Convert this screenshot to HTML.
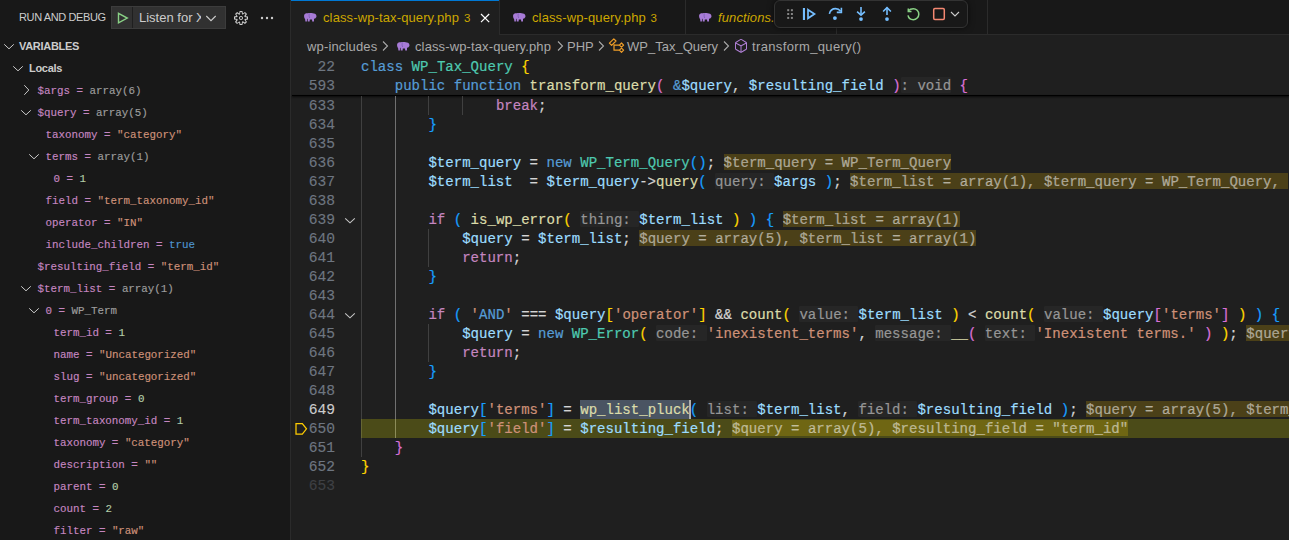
<!DOCTYPE html>
<html><head><meta charset="utf-8">
<style>
*{box-sizing:border-box}
html,body{margin:0;padding:0}
body{width:1289px;height:540px;overflow:hidden;background:#1f1f1f;position:relative;font-family:"Liberation Sans",sans-serif;color:#cccccc}
.abs{position:absolute}
#side{position:absolute;left:0;top:0;width:290px;height:540px;background:#181818}
#sideborder{position:absolute;left:290px;top:0;width:1px;height:540px;background:#2b2b2b}
.vr{position:absolute;height:22px;line-height:22px;padding-top:1px;-webkit-text-stroke:0.15px;font-family:"Liberation Mono",monospace;font-size:10.83px;white-space:pre}
.chev{position:absolute;width:16px;height:16px}
#tabs{position:absolute;left:291px;top:0;width:998px;height:35px;background:#181818}
#tabsborder{position:absolute;left:291px;top:34px;width:998px;height:1px;background:#2b2b2b}
.tab{position:absolute;top:0;height:35px;background:#181818}
.tabt{position:absolute;top:0;height:35px;line-height:35px;font-size:13px;color:#cca700;white-space:pre;letter-spacing:0.12px}
.ln{position:absolute;left:291px;width:44px;height:19px;line-height:19px;padding-top:1px;text-align:right;font-family:"Liberation Mono",monospace;font-size:14.6px;-webkit-text-stroke:0.15px;color:#6e7681}
.cl{position:absolute;left:361px;height:19px;line-height:19px;font-family:"Liberation Mono",monospace;font-size:14.05px;white-space:pre;color:#d4d4d4;padding-top:1px;-webkit-text-stroke:0.2px}
.ig{position:absolute;width:1px;height:19px}
.hint{color:#969696;position:relative;display:inline-block}
.hint::before{content:"";position:absolute;left:0;right:0;top:0px;height:16px;background:#262626;z-index:-1;border-radius:1px}
.iv{color:rgba(255,255,255,0.5);position:relative;display:inline-block;margin-left:8.5px}
.iv::before{content:"";position:absolute;left:0;right:0;top:0px;height:16px;background:rgba(255,200,0,0.2);z-index:-1}
.bc{position:absolute;top:36px;height:22px;line-height:22px;font-size:13px;color:#a9a9a9;white-space:pre}
</style></head><body>

<!-- SIDEBAR -->
<div id="side"></div>
<div id="sideborder"></div>
<div class="abs" style="left:19px;top:0;height:35px;line-height:35px;font-size:11px;letter-spacing:-0.38px;color:#cccccc;white-space:pre">RUN AND DEBUG</div>
<!-- launch button -->
<div class="abs" style="left:111px;top:6px;width:115px;height:23px;background:#313131;border:1px solid #3c3c3c;border-radius:0"></div>
<div class="abs" style="left:132px;top:7px;width:1px;height:21px;background:#1f1f1f"></div>
<svg class="abs" style="left:114px;top:9px" width="16" height="17" viewBox="0 0 16 17"><path d="M4.5 4.3 L13.3 9.1 L4.5 13.9 Z" fill="none" stroke="#89d185" stroke-width="1.4" stroke-linejoin="miter"/></svg>
<div class="abs" style="left:139px;top:6px;width:62px;height:23px;line-height:23px;font-size:13px;color:#cccccc;white-space:pre;overflow:hidden">Listen for Xdebug</div>
<svg class="abs" style="left:203px;top:10px" width="16" height="16" viewBox="0 0 16 16"><path d="M3.3 6 L8 10.7 L12.7 6" fill="none" stroke="#cccccc" stroke-width="1.1"/></svg>
<!-- gear -->
<svg class="abs" style="left:233px;top:10px" width="16" height="16" viewBox="0 0 16 16">
<path fill="#cccccc" fill-rule="evenodd" d="M9.1 4.4L8.6 2H7.4l-.5 2.4-.7.3-2-1.3-.9.8 1.3 2-.2.7-2.4.5v1.2l2.4.5.3.8-1.3 2 .8.8 2-1.3.8.3.4 2.3h1.2l.5-2.4.8-.3 2 1.3.8-.8-1.3-2 .3-.8 2.3-.4V7.4l-2.4-.5-.3-.8 1.3-2-.8-.8-2 1.3-.7-.2zM9.4 1l.5 2.4L12 2.1l2 2-1.4 2.1 2.4.4v2.8l-2.4.5L14 12l-2 2-2.1-1.4-.5 2.4H6.6l-.5-2.4L4 13.9l-2-2 1.4-2.1L1 9.4V6.6l2.4-.5L2.1 4l2-2 2.1 1.4.4-2.4h2.8zm.6 7c0 1.1-.9 2-2 2s-2-.9-2-2 .9-2 2-2 2 .9 2 2zM8 9c.6 0 1-.4 1-1s-.4-1-1-1-1 .4-1 1 .4 1 1 1z"/></svg>
<!-- ellipsis -->
<svg class="abs" style="left:259px;top:10px" width="16" height="16" viewBox="0 0 16 16"><circle cx="3" cy="8" r="1.2" fill="#cccccc"/><circle cx="8" cy="8" r="1.2" fill="#cccccc"/><circle cx="13" cy="8" r="1.2" fill="#cccccc"/></svg>

<!-- variables header -->
<svg class="abs" style="left:1px;top:38px" width="16" height="16" viewBox="0 0 16 16"><path d="M3.2 6.3 L8 10.8 L12.8 6.3" fill="none" stroke="#c8c8c8" stroke-width="1"/></svg>
<div class="abs" style="left:19px;top:35px;height:22px;line-height:22px;font-size:11px;font-weight:bold;letter-spacing:-0.3px;color:#cccccc">VARIABLES</div>
<svg class="abs" style="left:10px;top:60px" width="16" height="16" viewBox="0 0 16 16"><path d="M3.2 6.3 L8 10.8 L12.8 6.3" fill="none" stroke="#c8c8c8" stroke-width="1"/></svg>
<div class="abs" style="left:29px;top:57px;height:22px;line-height:22px;font-size:11px;font-weight:bold;letter-spacing:-0.3px;color:#cccccc">Locals</div>
<div class="chev" style="left:17.9px;top:82px"><svg width="16" height="16" viewBox="0 0 16 16"><path d="M6.3 3.2 L10.8 8 L6.3 12.8" fill="none" stroke="#c8c8c8" stroke-width="1"/></svg></div>
<div class="vr" style="left:37.4px;top:79px"><span style="color:#c586c0">$args =</span> <span style="color:#9d9d9d">array(6)</span></div>
<div class="chev" style="left:17.9px;top:104px"><svg width="16" height="16" viewBox="0 0 16 16"><path d="M3.2 6.3 L8 10.8 L12.8 6.3" fill="none" stroke="#c8c8c8" stroke-width="1"/></svg></div>
<div class="vr" style="left:37.4px;top:101px"><span style="color:#c586c0">$query =</span> <span style="color:#9d9d9d">array(5)</span></div>
<div class="vr" style="left:45.6px;top:123px"><span style="color:#c586c0">taxonomy =</span> <span style="color:#ce9178">"category"</span></div>
<div class="chev" style="left:26.1px;top:148px"><svg width="16" height="16" viewBox="0 0 16 16"><path d="M3.2 6.3 L8 10.8 L12.8 6.3" fill="none" stroke="#c8c8c8" stroke-width="1"/></svg></div>
<div class="vr" style="left:45.6px;top:145px"><span style="color:#c586c0">terms =</span> <span style="color:#9d9d9d">array(1)</span></div>
<div class="vr" style="left:53.4px;top:167px"><span style="color:#c586c0">0 =</span> <span style="color:#b5cea8">1</span></div>
<div class="vr" style="left:45.6px;top:189px"><span style="color:#c586c0">field =</span> <span style="color:#ce9178">"term_taxonomy_id"</span></div>
<div class="vr" style="left:45.6px;top:211px"><span style="color:#c586c0">operator =</span> <span style="color:#ce9178">"IN"</span></div>
<div class="vr" style="left:45.6px;top:233px"><span style="color:#c586c0">include_children =</span> <span style="color:#4e94ce">true</span></div>
<div class="vr" style="left:37.4px;top:255px"><span style="color:#c586c0">$resulting_field =</span> <span style="color:#ce9178">"term_id"</span></div>
<div class="chev" style="left:17.9px;top:280px"><svg width="16" height="16" viewBox="0 0 16 16"><path d="M3.2 6.3 L8 10.8 L12.8 6.3" fill="none" stroke="#c8c8c8" stroke-width="1"/></svg></div>
<div class="vr" style="left:37.4px;top:277px"><span style="color:#c586c0">$term_list =</span> <span style="color:#9d9d9d">array(1)</span></div>
<div class="chev" style="left:26.1px;top:302px"><svg width="16" height="16" viewBox="0 0 16 16"><path d="M3.2 6.3 L8 10.8 L12.8 6.3" fill="none" stroke="#c8c8c8" stroke-width="1"/></svg></div>
<div class="vr" style="left:45.6px;top:299px"><span style="color:#c586c0">0 =</span> <span style="color:#9d9d9d">WP_Term</span></div>
<div class="vr" style="left:53.4px;top:321px"><span style="color:#c586c0">term_id =</span> <span style="color:#b5cea8">1</span></div>
<div class="vr" style="left:53.4px;top:343px"><span style="color:#c586c0">name =</span> <span style="color:#ce9178">"Uncategorized"</span></div>
<div class="vr" style="left:53.4px;top:365px"><span style="color:#c586c0">slug =</span> <span style="color:#ce9178">"uncategorized"</span></div>
<div class="vr" style="left:53.4px;top:387px"><span style="color:#c586c0">term_group =</span> <span style="color:#b5cea8">0</span></div>
<div class="vr" style="left:53.4px;top:409px"><span style="color:#c586c0">term_taxonomy_id =</span> <span style="color:#b5cea8">1</span></div>
<div class="vr" style="left:53.4px;top:431px"><span style="color:#c586c0">taxonomy =</span> <span style="color:#ce9178">"category"</span></div>
<div class="vr" style="left:53.4px;top:453px"><span style="color:#c586c0">description =</span> <span style="color:#ce9178">""</span></div>
<div class="vr" style="left:53.4px;top:475px"><span style="color:#c586c0">parent =</span> <span style="color:#b5cea8">0</span></div>
<div class="vr" style="left:53.4px;top:497px"><span style="color:#c586c0">count =</span> <span style="color:#b5cea8">2</span></div>
<div class="vr" style="left:53.4px;top:519px"><span style="color:#c586c0">filter =</span> <span style="color:#ce9178">"raw"</span></div>

<!-- TABS -->
<div id="tabs"></div>
<div id="tabsborder"></div>
<div class="tab" style="left:291px;width:208px;height:35px;background:#1f1f1f;border-top:1px solid #0078d4"></div>
<div class="abs" style="left:499px;top:0;width:1px;height:35px;background:#2b2b2b"></div>
<div class="abs" style="left:685px;top:0;width:1px;height:35px;background:#2b2b2b"></div>
<div class="abs" style="left:836px;top:0;width:1px;height:35px;background:#2b2b2b"></div>
<div class="abs" style="left:987px;top:0;width:1px;height:35px;background:#2b2b2b"></div>
<svg class="abs" style="left:303px;top:13px" width="14" height="10" viewBox="0 0 14 10"><path fill="#a77bd6" d="M1.2 2 C1.6 0.6 3.2 0 4.8 0.3 C6.5 -0.1 10 0 12 0.8 C13.2 1.4 13.6 2.8 13.4 4 L12.2 5.6 L11 5.8 L11 8.4 L9.2 8.4 L9 6.4 L6.8 6.4 L6.6 8.4 L4.8 8.4 L4.6 6.2 L4 5.4 L3.9 8.4 L2.4 8.4 L2.2 6.4 C1.2 5.4 0.9 3.4 1.2 2 Z"/><path d="M6.4 0.5 C5.9 2 6 3.6 6.7 5" fill="none" stroke="#7a5cb4" stroke-width="0.8"/></svg>
<svg class="abs" style="left:512px;top:13px" width="14" height="10" viewBox="0 0 14 10"><path fill="#a77bd6" d="M1.2 2 C1.6 0.6 3.2 0 4.8 0.3 C6.5 -0.1 10 0 12 0.8 C13.2 1.4 13.6 2.8 13.4 4 L12.2 5.6 L11 5.8 L11 8.4 L9.2 8.4 L9 6.4 L6.8 6.4 L6.6 8.4 L4.8 8.4 L4.6 6.2 L4 5.4 L3.9 8.4 L2.4 8.4 L2.2 6.4 C1.2 5.4 0.9 3.4 1.2 2 Z"/><path d="M6.4 0.5 C5.9 2 6 3.6 6.7 5" fill="none" stroke="#7a5cb4" stroke-width="0.8"/></svg>
<svg class="abs" style="left:698px;top:13px" width="14" height="10" viewBox="0 0 14 10"><path fill="#a77bd6" d="M1.2 2 C1.6 0.6 3.2 0 4.8 0.3 C6.5 -0.1 10 0 12 0.8 C13.2 1.4 13.6 2.8 13.4 4 L12.2 5.6 L11 5.8 L11 8.4 L9.2 8.4 L9 6.4 L6.8 6.4 L6.6 8.4 L4.8 8.4 L4.6 6.2 L4 5.4 L3.9 8.4 L2.4 8.4 L2.2 6.4 C1.2 5.4 0.9 3.4 1.2 2 Z"/><path d="M6.4 0.5 C5.9 2 6 3.6 6.7 5" fill="none" stroke="#7a5cb4" stroke-width="0.8"/></svg>
<div class="tabt" style="left:323px">class-wp-tax-query.php</div>
<div class="tabt" style="left:464px;top:1px;font-size:11.5px">3</div>
<svg class="abs" style="left:477px;top:10px" width="16" height="16" viewBox="0 0 16 16"><path d="M4 4 L12.2 12.2 M12.2 4 L4 12.2" stroke="#ffffff" stroke-width="1.2"/></svg>
<div class="tabt" style="left:532px">class-wp-query.php</div>
<div class="tabt" style="left:650.5px;top:1px;font-size:11.5px">3</div>
<div class="tabt" style="left:718px;font-style:italic">functions.</div>

<!-- debug toolbar -->
<div class="abs" style="left:774px;top:0px;width:194px;height:28px;background:#181818;border:1px solid #333333;border-radius:6px;box-shadow:0 0 6px rgba(0,0,0,0.6)"></div>

<svg class="abs" style="left:786px;top:8px" width="8" height="12" viewBox="0 0 8 12"><g fill="#858585"><rect x="1.2" y="1.2" width="2" height="2"/><rect x="4.9" y="1.2" width="2" height="2"/><rect x="1.2" y="5" width="2" height="2"/><rect x="4.9" y="5" width="2" height="2"/><rect x="1.2" y="8.9" width="2" height="2"/><rect x="4.9" y="8.9" width="2" height="2"/></g></svg>
<svg class="abs" style="left:801px;top:6px" width="16" height="16" viewBox="0 0 16 16"><rect x="1.9" y="2" width="2.1" height="12" fill="#75beff"/><path d="M7 3.7 L13.5 8 L7 12.3 Z" fill="none" stroke="#75beff" stroke-width="1.7" stroke-linejoin="miter"/></svg>
<svg class="abs" style="left:827px;top:6px" width="16" height="16" viewBox="0 0 16 16"><path d="M2.4 7.8 C3.2 4.2 6 2.6 8.6 2.6 C10.8 2.6 12.4 3.6 13.6 5.2" fill="none" stroke="#75beff" stroke-width="1.6"/><path d="M14.4 1.8 L14.4 6.4 L9.8 6.4" fill="none" stroke="#75beff" stroke-width="1.6"/><circle cx="7.9" cy="12.1" r="1.9" fill="#75beff"/></svg>
<svg class="abs" style="left:853px;top:6px" width="16" height="16" viewBox="0 0 16 16"><path d="M8 1 L8 9" stroke="#75beff" stroke-width="1.6"/><path d="M4.1 5.6 L8 9.1 L11.9 5.6" fill="none" stroke="#75beff" stroke-width="1.6"/><circle cx="8" cy="13.1" r="1.9" fill="#75beff"/></svg>
<svg class="abs" style="left:879px;top:6px" width="16" height="16" viewBox="0 0 16 16"><path d="M8 9 L8 1.6" stroke="#75beff" stroke-width="1.6"/><path d="M4.1 5.5 L8 1.6 L11.9 5.5" fill="none" stroke="#75beff" stroke-width="1.6"/><circle cx="8" cy="13.1" r="1.9" fill="#75beff"/></svg>
<svg class="abs" style="left:905px;top:6px" width="16" height="16" viewBox="0 0 16 16"><path d="M3.6 4.6 C4.6 3.3 6.3 2.7 8.3 2.7 C11.3 2.7 13.8 5.2 13.8 8.2 C13.8 11.2 11.3 13.7 8.3 13.7 C5.7 13.7 3.5 11.9 3 9.4" fill="none" stroke="#89d185" stroke-width="1.5"/><path d="M3.3 2.4 L3.3 5.6 L6.5 5.6" fill="none" stroke="#89d185" stroke-width="1.5"/></svg>
<svg class="abs" style="left:931px;top:6px" width="16" height="16" viewBox="0 0 16 16"><rect x="2.7" y="2.6" width="10.6" height="10.8" rx="1.2" fill="none" stroke="#f48771" stroke-width="1.5"/></svg>
<svg class="abs" style="left:947px;top:6px" width="16" height="16" viewBox="0 0 16 16"><path d="M4 6 L8 10 L12 6" fill="none" stroke="#cccccc" stroke-width="1.1"/></svg>

<!-- BREADCRUMBS -->
<svg class="abs" style="left:381px;top:40px" width="8" height="12" viewBox="0 0 8 12"><path d="M2 1.5 L6.5 6 L2 10.5" fill="none" stroke="#a9a9a9" stroke-width="1.1"/></svg>
<svg class="abs" style="left:556px;top:40px" width="8" height="12" viewBox="0 0 8 12"><path d="M2 1.5 L6.5 6 L2 10.5" fill="none" stroke="#a9a9a9" stroke-width="1.1"/></svg>
<svg class="abs" style="left:597px;top:40px" width="8" height="12" viewBox="0 0 8 12"><path d="M2 1.5 L6.5 6 L2 10.5" fill="none" stroke="#a9a9a9" stroke-width="1.1"/></svg>
<svg class="abs" style="left:722px;top:40px" width="8" height="12" viewBox="0 0 8 12"><path d="M2 1.5 L6.5 6 L2 10.5" fill="none" stroke="#a9a9a9" stroke-width="1.1"/></svg>
<svg class="abs" style="left:396px;top:42px" width="14" height="10" viewBox="0 0 14 10"><path fill="#a77bd6" d="M1.2 2 C1.6 0.6 3.2 0 4.8 0.3 C6.5 -0.1 10 0 12 0.8 C13.2 1.4 13.6 2.8 13.4 4 L12.2 5.6 L11 5.8 L11 8.4 L9.2 8.4 L9 6.4 L6.8 6.4 L6.6 8.4 L4.8 8.4 L4.6 6.2 L4 5.4 L3.9 8.4 L2.4 8.4 L2.2 6.4 C1.2 5.4 0.9 3.4 1.2 2 Z"/><path d="M6.4 0.5 C5.9 2 6 3.6 6.7 5" fill="none" stroke="#7a5cb4" stroke-width="0.8"/></svg>
<svg class="abs" style="left:606px;top:36px" width="20" height="20" viewBox="0 0 20 20"><g fill="none" stroke="#ee9d28" stroke-width="1.2" stroke-linejoin="round"><path d="M3.4 7.2 L7.8 2.8 L10 5 L5.6 9.4 Z"/><path d="M8 8.2 L8 14.2 L13.3 14.2 M8 9.1 L13.3 9.1"/><path d="M13.4 9.1 L15.5 7 L17.6 9.1 L15.5 11.2 Z"/><path d="M13.4 14.2 L15.5 12.1 L17.6 14.2 L15.5 16.3 Z"/></g></svg>
<svg class="abs" style="left:733px;top:38px" width="16" height="16" viewBox="0 0 16 16"><path fill="#b180d7" d="M13.51 4l-5-3h-1l-5 3-.49.86v6l.49.85 5 3h1l5-3 .49-.85v-6L13.51 4zm-6 9.56l-4.5-2.7V5.7l4.5 2.45v5.41zM3.27 4.7l4.74-2.84 4.74 2.84-4.74 2.59L3.27 4.7zm9.74 6.16l-4.5 2.7V8.15l4.5-2.45v5.16z"/></svg>
<div class="bc" style="left:307px;letter-spacing:0.15px">wp-includes</div>
<div class="bc" style="left:567px">PHP</div>
<div class="bc" style="left:415px;letter-spacing:0.12px">class-wp-tax-query.php</div>
<div class="bc" style="left:627px">WP_Tax_Query</div>
<div class="bc" style="left:752px;letter-spacing:0.36px">transform_query()</div>

<!-- STICKY -->
<div class="ln" style="top:57px">22</div>
<div class="cl" style="top:57px"><span style="color:#569cd6">class</span> <span style="color:#4ec9b0">WP_Tax_Query</span> <span style="color:#ffd700">{</span></div>
<div class="ln" style="top:76px">593</div>
<div class="cl" style="top:76px">    <span style="color:#569cd6">public</span> <span style="color:#569cd6">function</span> <span style="color:#dcdcaa">transform_query</span><span style="color:#da70d6">(</span> <span style="color:#569cd6">&amp;</span><span style="color:#9cdcfe">$query</span><span style="color:#d4d4d4">, </span><span style="color:#9cdcfe">$resulting_field</span> <span style="color:#da70d6">)</span><span class="hint">: void</span> <span style="color:#da70d6">{</span></div>
<div class="abs" style="left:292px;top:95px;width:997px;height:1px;background:#000;box-shadow:0 1px 2px #000"></div>

<!-- CODE -->
<svg class="abs" style="left:294px;top:421px" width="15" height="15" viewBox="0 0 15 15"><path d="M2 2.5 L8.3 2.5 L12.5 7.8 L8.3 13.1 L2 13.1 Z" fill="none" stroke="#ffcc00" stroke-width="1.25" stroke-linejoin="miter"/></svg>
<svg class="abs" style="left:342px;top:212px" width="16" height="16" viewBox="0 0 16 16"><path d="M3.2 6.3 L8 10.8 L12.8 6.3" fill="none" stroke="#c5c5c5" stroke-width="1.1"/></svg>
<svg class="abs" style="left:342px;top:307px" width="16" height="16" viewBox="0 0 16 16"><path d="M3.2 6.3 L8 10.8 L12.8 6.3" fill="none" stroke="#c5c5c5" stroke-width="1.1"/></svg>

<div class="ln" style="top:96px;color:#6e7681">633</div>
<div class="ig" style="left:361.00px;top:96px;background:#404040"></div>
<div class="ig" style="left:394.72px;top:96px;background:#707070"></div>
<div class="ig" style="left:428.44px;top:96px;background:#404040"></div>
<div class="ig" style="left:462.16px;top:96px;background:#404040"></div>
<div class="ln" style="top:115px;color:#6e7681">634</div>
<div class="ig" style="left:361.00px;top:115px;background:#404040"></div>
<div class="ig" style="left:394.72px;top:115px;background:#707070"></div>
<div class="ln" style="top:134px;color:#6e7681">635</div>
<div class="ig" style="left:361.00px;top:134px;background:#404040"></div>
<div class="ig" style="left:394.72px;top:134px;background:#707070"></div>
<div class="ln" style="top:153px;color:#6e7681">636</div>
<div class="ig" style="left:361.00px;top:153px;background:#404040"></div>
<div class="ig" style="left:394.72px;top:153px;background:#707070"></div>
<div class="ln" style="top:172px;color:#6e7681">637</div>
<div class="ig" style="left:361.00px;top:172px;background:#404040"></div>
<div class="ig" style="left:394.72px;top:172px;background:#707070"></div>
<div class="ln" style="top:191px;color:#6e7681">638</div>
<div class="ig" style="left:361.00px;top:191px;background:#404040"></div>
<div class="ig" style="left:394.72px;top:191px;background:#707070"></div>
<div class="ln" style="top:210px;color:#6e7681">639</div>
<div class="ig" style="left:361.00px;top:210px;background:#404040"></div>
<div class="ig" style="left:394.72px;top:210px;background:#707070"></div>
<div class="ln" style="top:229px;color:#6e7681">640</div>
<div class="ig" style="left:361.00px;top:229px;background:#404040"></div>
<div class="ig" style="left:394.72px;top:229px;background:#707070"></div>
<div class="ig" style="left:428.44px;top:229px;background:#404040"></div>
<div class="ln" style="top:248px;color:#6e7681">641</div>
<div class="ig" style="left:361.00px;top:248px;background:#404040"></div>
<div class="ig" style="left:394.72px;top:248px;background:#707070"></div>
<div class="ig" style="left:428.44px;top:248px;background:#404040"></div>
<div class="ln" style="top:267px;color:#6e7681">642</div>
<div class="ig" style="left:361.00px;top:267px;background:#404040"></div>
<div class="ig" style="left:394.72px;top:267px;background:#707070"></div>
<div class="ln" style="top:286px;color:#6e7681">643</div>
<div class="ig" style="left:361.00px;top:286px;background:#404040"></div>
<div class="ig" style="left:394.72px;top:286px;background:#707070"></div>
<div class="ln" style="top:305px;color:#6e7681">644</div>
<div class="ig" style="left:361.00px;top:305px;background:#404040"></div>
<div class="ig" style="left:394.72px;top:305px;background:#707070"></div>
<div class="ln" style="top:324px;color:#6e7681">645</div>
<div class="ig" style="left:361.00px;top:324px;background:#404040"></div>
<div class="ig" style="left:394.72px;top:324px;background:#707070"></div>
<div class="ig" style="left:428.44px;top:324px;background:#404040"></div>
<div class="ln" style="top:343px;color:#6e7681">646</div>
<div class="ig" style="left:361.00px;top:343px;background:#404040"></div>
<div class="ig" style="left:394.72px;top:343px;background:#707070"></div>
<div class="ig" style="left:428.44px;top:343px;background:#404040"></div>
<div class="ln" style="top:362px;color:#6e7681">647</div>
<div class="ig" style="left:361.00px;top:362px;background:#404040"></div>
<div class="ig" style="left:394.72px;top:362px;background:#707070"></div>
<div class="ln" style="top:381px;color:#6e7681">648</div>
<div class="ig" style="left:361.00px;top:381px;background:#404040"></div>
<div class="ig" style="left:394.72px;top:381px;background:#707070"></div>
<div class="ln" style="top:400px;color:#cccccc">649</div>
<div class="ig" style="left:361.00px;top:400px;background:#404040"></div>
<div class="ig" style="left:394.72px;top:400px;background:#707070"></div>
<div class="ln" style="top:419px;color:#6e7681">650</div>
<div class="ig" style="left:361.00px;top:419px;background:#404040"></div>
<div class="ig" style="left:394.72px;top:419px;background:#707070"></div>
<div class="ln" style="top:438px;color:#6e7681">651</div>
<div class="ig" style="left:361.00px;top:438px;background:#404040"></div>
<div class="ln" style="top:457px;color:#6e7681">652</div>
<div class="ln" style="top:476px;color:#3e4044">653</div>
<div class="abs" style="left:361px;top:419px;width:928px;height:19px;background:rgba(255,255,0,0.2)"></div>
<div class="abs" style="left:580px;top:400px;width:110px;height:19px;background:#4a5462"></div>
<div class="cl" style="top:96px">                <span style="color:#c586c0">break</span><span style="color:#d4d4d4">;</span></div>
<div class="cl" style="top:115px">        <span style="color:#179fff">}</span></div>
<div class="cl" style="top:134px"></div>
<div class="cl" style="top:153px">        <span style="color:#9cdcfe">$term_query</span><span style="color:#d4d4d4"> = </span><span style="color:#569cd6">new</span> <span style="color:#4ec9b0">WP_Term_Query</span><span style="color:#179fff">()</span><span style="color:#d4d4d4">;</span><span class="iv">$term_query = WP_Term_Query</span></div>
<div class="cl" style="top:172px">        <span style="color:#9cdcfe">$term_list</span><span style="color:#d4d4d4">  = </span><span style="color:#9cdcfe">$term_query</span><span style="color:#d4d4d4">-&gt;</span><span style="color:#dcdcaa">query</span><span style="color:#179fff">(</span> <span class="hint">query: </span><span style="color:#9cdcfe">$args</span> <span style="color:#179fff">)</span><span style="color:#d4d4d4">;</span><span class="iv">$term_list = array(1), $term_query = WP_Term_Query, </span></div>
<div class="cl" style="top:191px"></div>
<div class="cl" style="top:210px">        <span style="color:#c586c0">if</span> <span style="color:#179fff">(</span> <span style="color:#dcdcaa">is_wp_error</span><span style="color:#ffd700">(</span> <span class="hint">thing: </span><span style="color:#9cdcfe">$term_list</span> <span style="color:#ffd700">)</span> <span style="color:#179fff">)</span> <span style="color:#179fff">{</span><span class="iv">$term_list = array(1)</span></div>
<div class="cl" style="top:229px">            <span style="color:#9cdcfe">$query</span><span style="color:#d4d4d4"> = </span><span style="color:#9cdcfe">$term_list</span><span style="color:#d4d4d4">;</span><span class="iv">$query = array(5), $term_list = array(1)</span></div>
<div class="cl" style="top:248px">            <span style="color:#c586c0">return</span><span style="color:#d4d4d4">;</span></div>
<div class="cl" style="top:267px">        <span style="color:#179fff">}</span></div>
<div class="cl" style="top:286px"></div>
<div class="cl" style="top:305px">        <span style="color:#c586c0">if</span> <span style="color:#179fff">(</span> <span style="color:#ce9178">'</span><span style="color:#569cd6">AND</span><span style="color:#ce9178">'</span><span style="color:#d4d4d4"> === </span><span style="color:#9cdcfe">$query</span><span style="color:#ffd700">[</span><span style="color:#ce9178">'operator'</span><span style="color:#ffd700">]</span><span style="color:#d4d4d4"> &amp;&amp; </span><span style="color:#dcdcaa">count</span><span style="color:#ffd700">(</span> <span class="hint">value: </span><span style="color:#9cdcfe">$term_list</span> <span style="color:#ffd700">)</span><span style="color:#d4d4d4"> &lt; </span><span style="color:#dcdcaa">count</span><span style="color:#ffd700">(</span> <span class="hint">value: </span><span style="color:#9cdcfe">$query</span><span style="color:#da70d6">[</span><span style="color:#ce9178">'terms'</span><span style="color:#da70d6">]</span> <span style="color:#ffd700">)</span> <span style="color:#179fff">)</span> <span style="color:#179fff">{</span></div>
<div class="cl" style="top:324px">            <span style="color:#9cdcfe">$query</span><span style="color:#d4d4d4"> = </span><span style="color:#569cd6">new</span> <span style="color:#4ec9b0">WP_Error</span><span style="color:#ffd700">(</span> <span class="hint">code: </span><span style="color:#ce9178">'inexistent_terms'</span><span style="color:#d4d4d4">, </span><span class="hint">message: </span><span style="color:#dcdcaa">__</span><span style="color:#da70d6">(</span> <span class="hint">text: </span><span style="color:#ce9178">'Inexistent terms.'</span> <span style="color:#da70d6">)</span> <span style="color:#ffd700">)</span><span style="color:#d4d4d4">;</span><span class="iv">$query = array(5), $term_list = array(1)</span></div>
<div class="cl" style="top:343px">            <span style="color:#c586c0">return</span><span style="color:#d4d4d4">;</span></div>
<div class="cl" style="top:362px">        <span style="color:#179fff">}</span></div>
<div class="cl" style="top:381px"></div>
<div class="cl" style="top:400px">        <span style="color:#9cdcfe">$query</span><span style="color:#179fff">[</span><span style="color:#ce9178">'terms'</span><span style="color:#179fff">]</span><span style="color:#d4d4d4"> = </span><span style="color:#dcdcaa">wp_list_pluck</span><span style="color:#179fff">(</span> <span class="hint">list: </span><span style="color:#9cdcfe">$term_list</span><span style="color:#d4d4d4">, </span><span class="hint">field: </span><span style="color:#9cdcfe">$resulting_field</span> <span style="color:#179fff">)</span><span style="color:#d4d4d4">;</span><span class="iv">$query = array(5), $term_list = array(1), $resulting_field = "term_id"</span></div>
<div class="cl" style="top:419px">        <span style="color:#9cdcfe">$query</span><span style="color:#179fff">[</span><span style="color:#ce9178">'field'</span><span style="color:#179fff">]</span><span style="color:#d4d4d4"> = </span><span style="color:#9cdcfe">$resulting_field</span><span style="color:#d4d4d4">;</span><span class="iv">$query = array(5), $resulting_field = "term_id"</span></div>
<div class="cl" style="top:438px">    <span style="color:#da70d6">}</span></div>
<div class="cl" style="top:457px"><span style="color:#ffd700">}</span></div>
<div class="cl" style="top:476px"></div>
<div class="abs" style="left:689px;top:400px;width:2px;height:19px;background:#aeafad"></div>

</body></html>
